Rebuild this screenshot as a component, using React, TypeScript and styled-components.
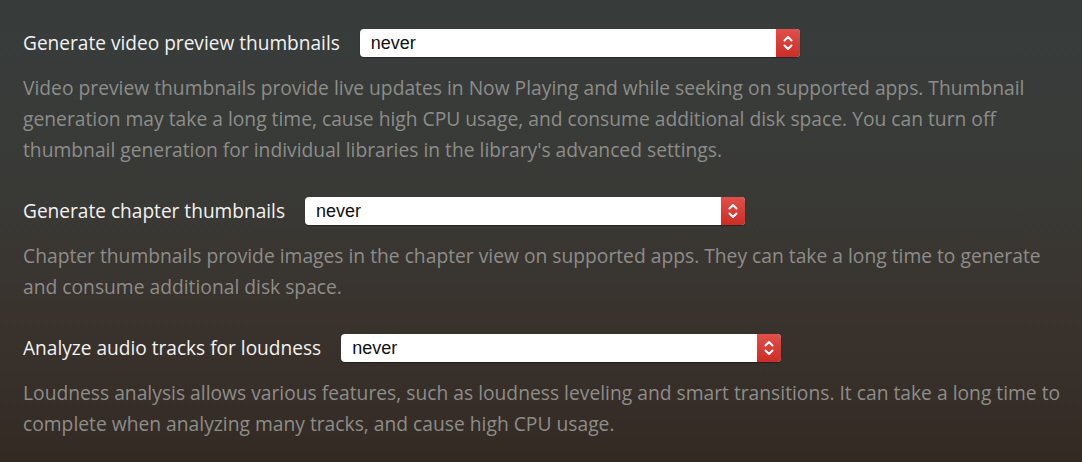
import React from 'react';
import styled, { createGlobalStyle } from 'styled-components';

const GlobalStyle = createGlobalStyle`
  html, body {
    margin: 0;
    padding: 0;
    height: 100%;
  }
  body {
    background: linear-gradient(180deg, #373c3b 0%, #393a36 40%, #39312b 75%, #332a24 100%);
    font-family: "Open Sans", "Noto Sans", sans-serif;
    overflow: hidden;
  }
`;

interface Setting {
  label: string;
  value: string;
  description: string;
}

const settings: Setting[] = [
  {
    label: 'Generate video preview thumbnails',
    value: 'never',
    description:
      "Video preview thumbnails provide live updates in Now Playing and while seeking on supported apps. Thumbnail generation may take a long time, cause high CPU usage, and consume additional disk space. You can turn off thumbnail generation for individual libraries in the library's advanced settings.",
  },
  {
    label: 'Generate chapter thumbnails',
    value: 'never',
    description:
      'Chapter thumbnails provide images in the chapter view on supported apps. They can take a long time to generate and consume additional disk space.',
  },
  {
    label: 'Analyze audio tracks for loudness',
    value: 'never',
    description:
      'Loudness analysis allows various features, such as loudness leveling and smart transitions. It can take a long time to complete when analyzing many tracks, and cause high CPU usage.',
  },
];

const Page = styled.div`
  width: 1082px;
  height: 462px;
  padding: 29px 16px 0 23px;
  box-sizing: border-box;
  display: flex;
  flex-direction: column;
  gap: 32px;
`;

const Group = styled.div`
  display: flex;
  flex-direction: column;
  gap: 15px;
`;

const Row = styled.div`
  display: flex;
  align-items: center;
  gap: 20px;
  height: 28px;
`;

const Label = styled.label`
  color: #f2f2f2;
  font-size: 19.1px;
  white-space: nowrap;
`;

const Select = styled.div`
  width: 440px;
  height: 28px;
  display: flex;
  border-radius: 4px;
  overflow: hidden;
  background: #fff;
  box-shadow: 0 1px 1px rgba(0, 0, 0, 0.35);
`;

const Value = styled.span`
  flex: 1;
  padding-left: 11px;
  line-height: 28px;
  font-family: "Liberation Sans", Arial, sans-serif;
  font-size: 18px;
  color: #111;
`;

const Stepper = styled.div`
  width: 24px;
  display: flex;
  align-items: center;
  justify-content: center;
  background: linear-gradient(180deg, #e0504a 0%, #cc2d26 100%);
`;

const Description = styled.p`
  margin: 0;
  color: #8d8d8a;
  font-size: 19.25px;
  line-height: 31px;
`;

const Chevrons = () => (
  <svg width="10" height="18" viewBox="0 0 10 18" fill="none" stroke="#fff" strokeWidth="2" strokeLinecap="round" strokeLinejoin="round">
    <path d="M1.5 6.5 L5 3 L8.5 6.5" />
    <path d="M1.5 11.5 L5 15 L8.5 11.5" />
  </svg>
);

export default function App() {
  return (
    <>
      <GlobalStyle />
      <Page>
        {settings.map((s) => (
          <Group key={s.label}>
            <Row>
              <Label>{s.label}</Label>
              <Select>
                <Value>{s.value}</Value>
                <Stepper>
                  <Chevrons />
                </Stepper>
              </Select>
            </Row>
            <Description>{s.description}</Description>
          </Group>
        ))}
      </Page>
    </>
  );
}
